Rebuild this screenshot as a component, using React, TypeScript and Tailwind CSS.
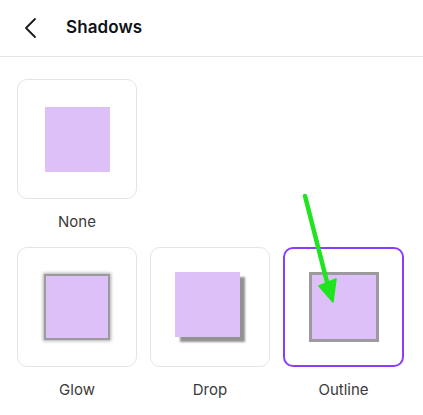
type Shadow = {
  name: string;
  square: string;
  selected?: boolean;
};

const SHADOWS: Shadow[] = [
  { name: "Glow", square: "w-[66px] h-[66px] border-[2px] border-[#9b9b9b] shadow-[0_0_3px_1px_rgba(120,120,120,0.6)]" },
  { name: "Drop", square: "w-[65px] h-[65px] -translate-x-[3px] -translate-y-[3px] shadow-[5px_5px_2px_rgba(110,110,110,0.75)]" },
  { name: "Outline", square: "w-[70px] h-[70px] border-[3px] border-[#9c9a9e]", selected: true },
];

function ShadowTile({ item }: { item: Shadow }) {
  return (
    <div className="flex flex-col items-center">
      <div
        className={
          item.selected
            ? "w-[121px] h-[120px] rounded-[10px] border-2 border-[#8b3dff] flex items-center justify-center bg-white"
            : "w-[120px] h-[120px] rounded-[10px] border border-[#e4e4e7] flex items-center justify-center bg-white"
        }
      >
        <div className={`bg-[#dcc0f7] ${item.square}`} />
      </div>
      <span className="mt-[13px] text-[15px] leading-[20px] text-[#3a3a3a]">
        {item.name}
      </span>
    </div>
  );
}

export default function App() {
  return (
    <main
      className="relative w-[423px] h-[415px] bg-white overflow-hidden"
      style={{ fontFamily: "Inter, 'Noto Sans', sans-serif" }}
    >
      <header className="h-[57px] border-b border-[#e6e6e6] flex items-center">
        <svg className="ml-[24px] w-[14px] h-[22px]" viewBox="0 0 14 22" fill="none">
          <polyline points="11,2 2,11 11,20" stroke="#1a1a1a" strokeWidth="1.8" strokeLinecap="round" strokeLinejoin="round" />
        </svg>
        <h1 className="ml-[28px] text-[17px] font-semibold text-[#0e1318] tracking-[0.1px]">
          Shadows
        </h1>
      </header>

      <div className="pl-[17px] pt-[22px]">
        <div className="flex flex-col items-center w-[120px]">
          <div className="w-[120px] h-[120px] rounded-[10px] border border-[#e4e4e7] flex items-center justify-center">
            <div className="w-[65px] h-[65px] bg-[#dcc0f7]" />
          </div>
          <span className="mt-[13px] text-[15px] leading-[20px] text-[#3a3a3a]">None</span>
        </div>

        <div className="mt-[15px] flex gap-[13px]">
          {SHADOWS.map((s) => (
            <ShadowTile key={s.name} item={s} />
          ))}
        </div>
      </div>

      {/* annotation arrow */}
      <svg
        className="absolute left-0 top-0 pointer-events-none"
        width="423"
        height="415"
        viewBox="0 0 423 415"
      >
        <line x1="305" y1="196" x2="327" y2="282" stroke="#1fe41f" strokeWidth="4.5" strokeLinecap="round" />
        <polygon points="319,286 336,279 333,302" fill="#1fe41f" stroke="#1fe41f" strokeWidth="1.5" strokeLinejoin="round" />
      </svg>
    </main>
  );
}
